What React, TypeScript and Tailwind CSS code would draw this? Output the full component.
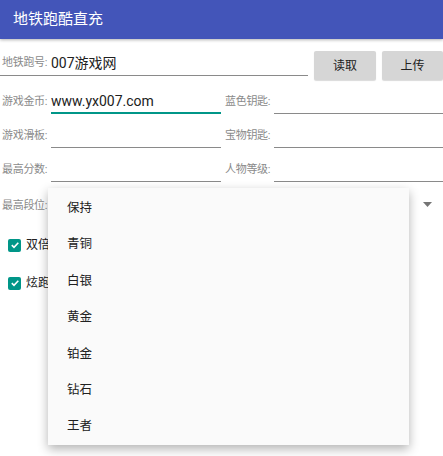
const font = { fontFamily: 'Roboto, "Noto Sans CJK SC", sans-serif' };

function Field({ label, value, width, focused }: { label: string; value?: string; width: string; focused?: boolean }) {
  return (
    <div className={`flex items-center ${width}`}>
      <span className="w-[51px] shrink-0 pl-[2px] text-[11px] tracking-[-0.3px] text-[#8a8a8a] whitespace-nowrap">{label}</span>
      <div
        className={`flex h-[24px] flex-1 items-center ${
          focused ? "border-b-2 border-[#009688]" : "border-b border-[#8a8a8a]"
        }`}
      >
        <span className="text-[14px] leading-none text-[#212121]">{value}</span>
      </div>
    </div>
  );
}

function FieldRow({ left, right, leftValue, focused }: { left: string; right: string; leftValue?: string; focused?: boolean }) {
  return (
    <div className="flex h-[34px] items-end pb-[4px]">
      <Field label={left} value={leftValue} width="w-[221px]" focused={focused} />
      <Field label={right} width="flex-1 pl-[2px]" />
    </div>
  );
}

function Check({ label }: { label: string }) {
  return (
    <div className="flex h-[38px] items-center pl-[8px]">
      <div className="flex h-[13px] w-[13px] items-center justify-center rounded-[2px] bg-[#009688]">
        <svg width="10" height="10" viewBox="0 0 10 10">
          <path d="M1.8 5.2 L4 7.3 L8.3 2.8" stroke="white" strokeWidth="1.6" fill="none" />
        </svg>
      </div>
      <span className="ml-[5px] text-[12px] text-[#212121]">{label}</span>
    </div>
  );
}

const ranks = ["保持", "青铜", "白银", "黄金", "铂金", "钻石", "王者"];

export default function App() {
  return (
    <div className="relative h-[456px] w-[443px] overflow-hidden bg-white" style={font}>
      <header className="flex h-[39px] items-center bg-[#4355B9] pl-[13px] shadow-[0_1px_3px_rgba(0,0,0,0.3)]">
        <h1 className="text-[15px] text-white">地铁跑酷直充</h1>
      </header>

      <div className="flex items-start pt-[12px]">
        <div className="flex h-[25px] w-[308px] items-center border-b border-[#8a8a8a]">
          <span className="w-[51px] shrink-0 pl-[2px] text-[11px] tracking-[-0.3px] text-[#8a8a8a] whitespace-nowrap">地铁跑号:</span>
          <span className="text-[14px] leading-none text-[#212121]">007游戏网</span>
        </div>
        <button className="ml-[6px] h-[29px] w-[62px] rounded-[2px] bg-[#d6d6d6] text-[12px] text-[#212121] shadow-[0_1px_1px_rgba(0,0,0,0.15)]">
          读取
        </button>
        <button className="ml-[6px] h-[29px] flex-1 rounded-[2px] bg-[#d6d6d6] text-[12px] text-[#212121] shadow-[0_1px_1px_rgba(0,0,0,0.15)]">
          上传
        </button>
      </div>

      <div className="mt-[4px]">
        <FieldRow left="游戏金币:" right="蓝色钥匙:" leftValue="www.yx007.com" focused />
        <FieldRow left="游戏滑板:" right="宝物钥匙:" />
        <FieldRow left="最高分数:" right="人物等级:" />
      </div>

      <div className="flex h-[40px] items-center justify-between pl-[2px] pr-[11px]">
        <span className="text-[11px] tracking-[-0.3px] text-[#8a8a8a]">最高段位:</span>
        <svg width="9" height="5" viewBox="0 0 9 5" className="-mt-[4px]">
          <path d="M0 0 L9 0 L4.5 5 Z" fill="#757575" />
        </svg>
      </div>

      <Check label="双倍" />
      <Check label="炫跑" />

      <div className="absolute left-[48px] top-[188px] flex h-[257px] w-[361px] flex-col bg-[#fafafa] pt-[2px] shadow-[0_4px_10px_rgba(0,0,0,0.3)]">
        {ranks.map((r) => (
          <div key={r} className="flex flex-1 items-center pl-[19px] text-[12.5px] text-[#212121]">
            {r}
          </div>
        ))}
      </div>
    </div>
  );
}
